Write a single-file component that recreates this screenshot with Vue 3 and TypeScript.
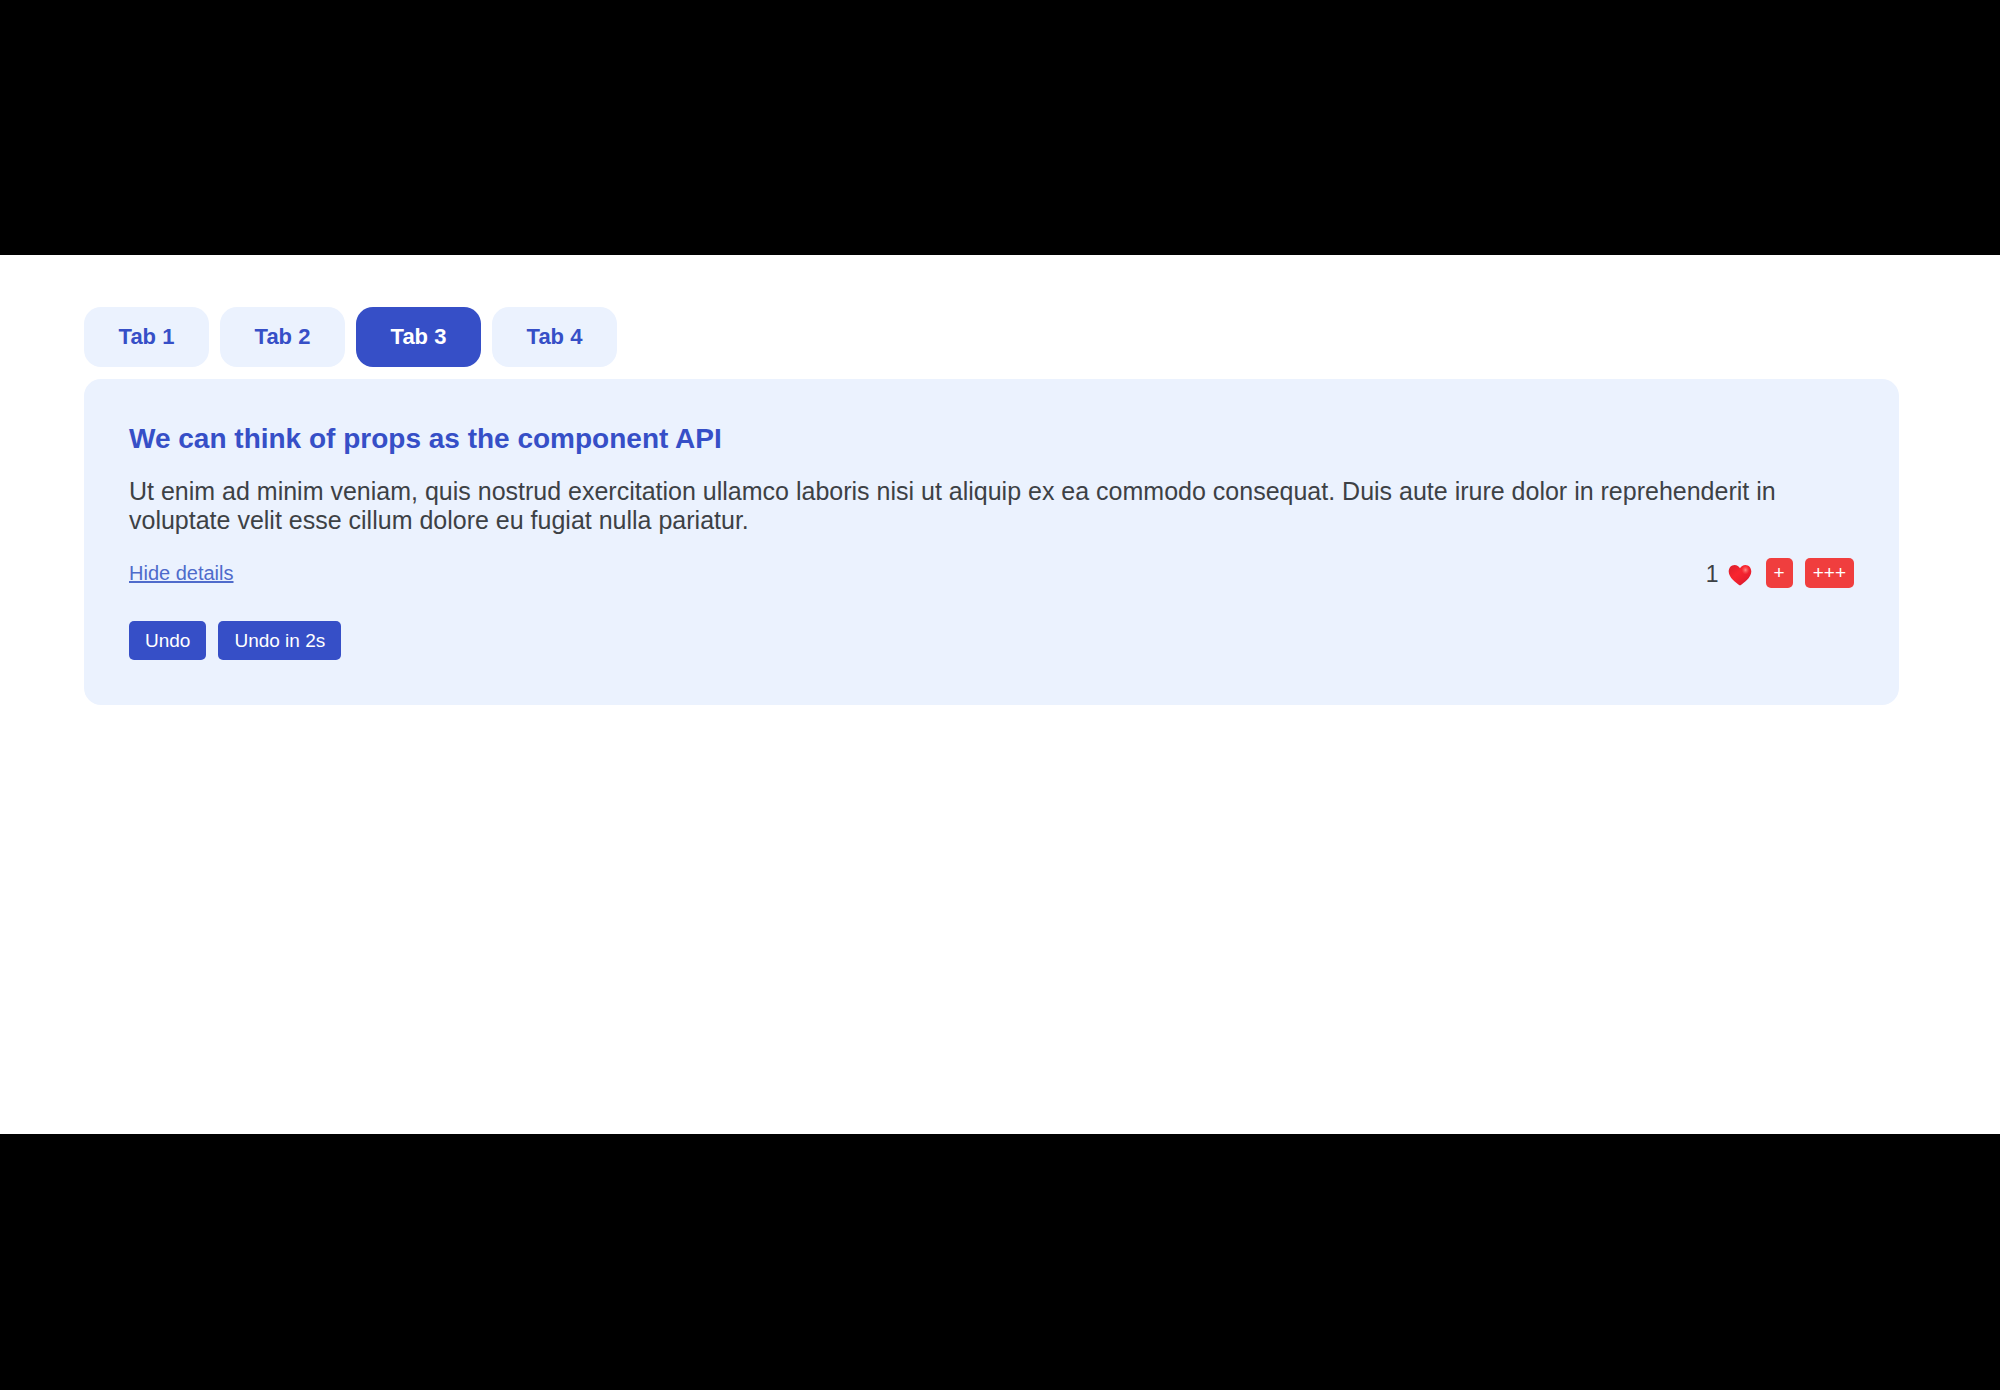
<script setup lang="ts">
import { computed, ref } from 'vue'

interface TabItem {
  label: string
  summary: string
  details: string
}

const tabs: TabItem[] = [1, 2, 3, 4].map((n) => ({
  label: `Tab ${n}`,
  summary: 'We can think of props as the component API',
  details:
    'Ut enim ad minim veniam, quis nostrud exercitation ullamco laboris nisi ut aliquip ex ea commodo consequat. Duis aute irure dolor in reprehenderit in voluptate velit esse cillum dolore eu fugiat nulla pariatur.',
}))

const activeTab = ref(2)
const showDetails = ref(true)
const likes = ref(1)
const item = computed(() => tabs[activeTab.value])

function undo() {
  showDetails.value = true
  likes.value = 0
}

function undoLater() {
  setTimeout(undo, 2000)
}
</script>

<template>
  <div class="page">
    <main class="stage">
      <nav class="tabs">
        <button
          v-for="(tab, index) in tabs"
          :key="tab.label"
          type="button"
          class="tab"
          :class="{ active: index === activeTab }"
          @click="activeTab = index"
        >
          {{ tab.label }}
        </button>
      </nav>

      <section class="tab-content">
        <h4>{{ item.summary }}</h4>
        <p v-if="showDetails">{{ item.details }}</p>

        <div class="tab-actions">
          <button type="button" class="toggle" @click="showDetails = !showDetails">
            {{ showDetails ? 'Hide' : 'Show' }} details
          </button>
          <div class="hearts-counter">
            <span class="count">
              {{ likes }}
              <svg class="heart" viewBox="0 0 24 22" aria-hidden="true">
                <defs>
                  <linearGradient id="heart-fill" x1="0" y1="0" x2="1" y2="1">
                    <stop offset="0" stop-color="#d91f2c" />
                    <stop offset="0.4" stop-color="#f9252f" />
                    <stop offset="0.7" stop-color="#e91f2e" />
                    <stop offset="1" stop-color="#a80f35" />
                  </linearGradient>
                  <radialGradient id="heart-shine">
                    <stop offset="0" stop-color="#ff8f89" />
                    <stop offset="1" stop-color="#ff5a58" stop-opacity="0" />
                  </radialGradient>
                </defs>
                <path
                  fill="url(#heart-fill)"
                  d="M12 21.5C8 19 .7 13.500 .7 7.500C.7 3.800 3.300 1 6.600 1C9 1 11 2.300 12 4.200C13 2.300 15 1 17.400 1C20.700 1 23.300 3.800 23.300 7.500C23.300 13.500 16 19 12 21.500Z"
                />
                <ellipse cx="17.500" cy="6" rx="4" ry="4.500" fill="url(#heart-shine)" />
              </svg>
            </span>
            <button type="button" class="like" @click="likes++">+</button>
            <button type="button" class="like" @click="likes += 3">+++</button>
          </div>
        </div>

        <div class="tab-undo">
          <button type="button" @click="undo">Undo</button>
          <button type="button" @click="undoLater">Undo in 2s</button>
        </div>
      </section>
    </main>
  </div>
</template>

<style>
body {
  margin: 0;
  background: #000;
}
</style>

<style scoped>
.page {
  box-sizing: border-box;
  min-height: 100vh;
  padding: 255px 0 256px;
  display: flex;
  flex-direction: column;
  background: #000;
  color: #3d4145;
  font-family: 'Liberation Sans', Arial, sans-serif;
}

.stage {
  flex: 1;
  padding: 52px 101px 52px 84px;
  background: #fff;
}

button {
  border: none;
  margin: 0;
  font-family: inherit;
  cursor: pointer;
}

.tabs {
  display: flex;
  gap: 11px;
  margin-bottom: 12px;
}

.tab {
  width: 125px;
  height: 60px;
  padding: 0;
  border-radius: 17px;
  background: #ebf2fe;
  color: #364fc7;
  font-size: 22px;
  font-weight: 700;
}

.tab.active {
  background: #364fc7;
  color: #fff;
}

.tab-content {
  padding: 45px;
  border-radius: 17px;
  background: #ebf2fe;
}

h4 {
  margin: 0 0 23px;
  color: #364fc7;
  font-size: 28px;
  line-height: 30px;
}

p {
  margin: 0 0 23px;
  font-size: 25px;
  line-height: 29px;
}

.tab-actions {
  display: flex;
  align-items: center;
  justify-content: space-between;
  margin-bottom: 33px;
}

.toggle {
  padding: 0;
  background: none;
  color: #4f6bcb;
  font-size: 20px;
  line-height: 30px;
  text-decoration: underline;
}

.hearts-counter {
  display: flex;
  align-items: center;
  gap: 12px;
}

.count {
  display: flex;
  align-items: center;
  gap: 9px;
  padding: 3px 2px 0 0;
  font-size: 23px;
  line-height: 27px;
}

.heart {
  width: 24px;
  height: 22px;
}

.like {
  height: 30px;
  padding: 0 8px;
  border-radius: 5px;
  background: #f03e3e;
  color: #fff;
  font-size: 19px;
}

.tab-undo {
  display: flex;
  gap: 12px;
}

.tab-undo button {
  height: 39px;
  padding: 0 16px;
  border-radius: 5px;
  background: #364fc7;
  color: #fff;
  font-size: 19px;
}
</style>
